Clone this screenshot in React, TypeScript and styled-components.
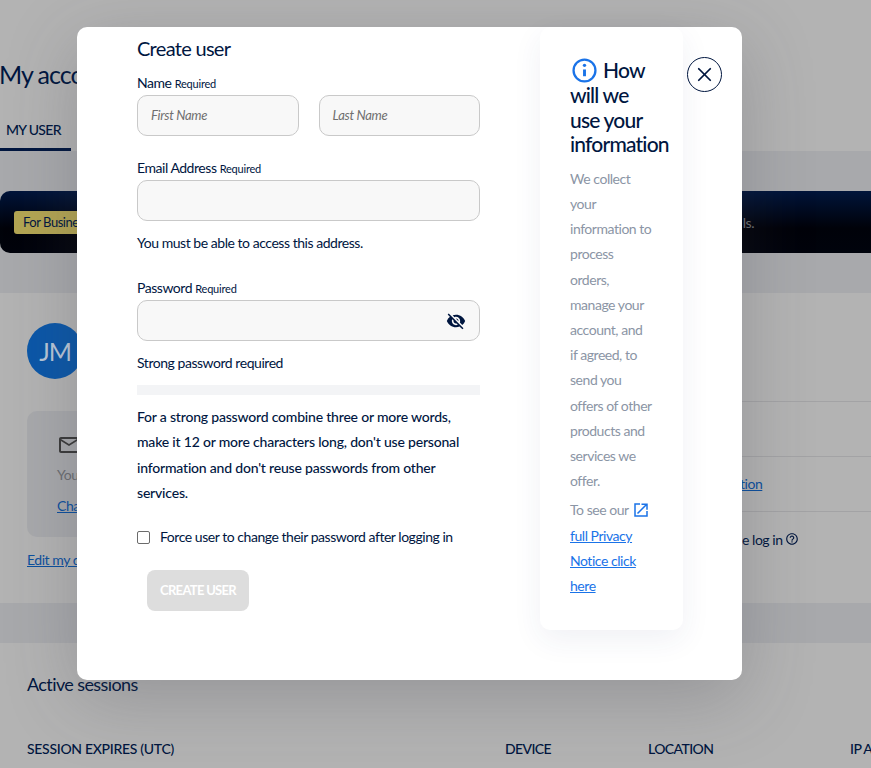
import React from 'react';
import styled, {createGlobalStyle} from 'styled-components';
import {MdVisibilityOff, MdOutlineEmail, MdOutlineHelpOutline} from 'react-icons/md';
import {X} from 'lucide-react';

const navy = '#00163f';
const panel = '#b3b3b3';
const strip = '#a8a9ac';

const GlobalStyle = createGlobalStyle`
  html, body {
    margin: 0;
    padding: 0;
    height: 100%;
    overflow: hidden;
  }
  body {
    font-family: 'Lato', 'Liberation Sans', sans-serif;
    color: ${navy};
    letter-spacing: -0.46px;
  }
  * {
    box-sizing: border-box;
  }
`;

const Page = styled.div`
  position: relative;
  width: 871px;
  height: 768px;
  overflow: hidden;
  background: ${strip};
`;

const TopPanel = styled.section`
  height: 151px;
  background: ${panel};
  padding-top: 59px;
`;

const PageTitle = styled.h1`
  margin: 0 0 0 -1px;
  font-size: 25px;
  line-height: 30px;
  font-weight: 400;
  letter-spacing: -1px;
  white-space: nowrap;
`;

const Tab = styled.div`
  width: 71px;
  height: 45px;
  margin-top: 17px;
  padding: 15px 0 0 6px;
  border-bottom: 3px solid ${navy};
  font-size: 14px;
  line-height: 18px;
  font-weight: 500;
  letter-spacing: -0.7px;
`;

const BannerStrip = styled.section`
  height: 142px;
  padding-top: 40px;
`;

const Banner = styled.div`
  display: flex;
  align-items: center;
  justify-content: space-between;
  height: 62px;
  padding: 0 117px 0 14px;
  border-radius: 10px 0 0 10px;
  background: linear-gradient(180deg, #00143a 0%, #000209 60%, #00030c 100%);
  color: #6f7073;
  font-size: 14px;
  white-space: nowrap;
`;

const Badge = styled.span`
  padding: 3px 9px;
  border-radius: 3px;
  background: #b3a553;
  color: ${navy};
  font-size: 13px;
  line-height: 17px;
`;

const ProfilePanel = styled.section`
  display: grid;
  grid-template-columns: 1fr 129px;
  height: 310px;
  background: ${panel};
`;

const ProfileLeft = styled.div`
  padding: 30px 0 0 27px;
`;

const Avatar = styled.div`
  display: flex;
  align-items: center;
  justify-content: center;
  width: 56px;
  height: 56px;
  border-radius: 50%;
  background: #0b57a8;
  color: #b8c6d8;
  font-size: 25px;
  letter-spacing: -1.2px;
`;

const EmailCard = styled.div`
  height: 126px;
  margin-top: 32px;
  padding: 22px 0 0 30px;
  border-radius: 10px 0 0 10px;
  background: #a8a9ac;
  font-size: 14px;
`;

const CardText = styled.div`
  margin-top: 5px;
  color: #6c6e72;
  line-height: 20px;
`;

const DarkLink = styled.a`
  color: #0b4f9e;
  font-size: 14px;
  line-height: 20px;
  text-decoration: underline;
`;

const CardLink = styled(DarkLink)`
  display: block;
  margin-top: 11px;
`;

const EditLink = styled(DarkLink)`
  display: block;
  margin-top: 13px;
`;

const ProfileRight = styled.div`
  padding-top: 108px;
`;

const DetailRow = styled.div`
  display: flex;
  align-items: center;
  gap: 2px;
  height: 55px;
  border-top: 1px solid #a3a3a5;
  font-size: 14px;
  white-space: nowrap;
`;

const RowLink = styled(DarkLink)`
  margin-left: -2px;
`;

const SessionsStrip = styled.section`
  height: 40px;
`;

const SessionsPanel = styled.section`
  height: 125px;
  padding: 30px 0 0 27px;
  background: ${panel};
`;

const SessionsTitle = styled.h2`
  margin: 0;
  font-size: 18px;
  line-height: 22px;
  font-weight: 400;
  letter-spacing: -0.6px;
`;

const SessionsHead = styled.div`
  display: grid;
  grid-template-columns: 478px 143px 202px 100px;
  margin-top: 45px;
  font-size: 14px;
  line-height: 18px;
  font-weight: 500;
  letter-spacing: -0.6px;
  white-space: nowrap;
`;

const SessionExpires = styled.span`
  letter-spacing: -0.3px;
`;

const Overlay = styled.div`
  position: absolute;
  top: 27px;
  left: 77px;
  display: flex;
  width: 665px;
  height: 653px;
  padding-left: 60px;
  border-radius: 10px;
  background: #fff;
  box-shadow: 0 18px 70px rgba(60, 62, 75, 0.26);
`;

const Form = styled.form`
  width: 343px;
`;

const ModalTitle = styled.h2`
  margin: 9px 0 0;
  font-size: 20px;
  line-height: 24px;
  font-weight: 400;
  letter-spacing: -0.7px;
`;

const Label = styled.label<{$top: number}>`
  display: block;
  margin-top: ${props => props.$top}px;
  font-size: 14px;
  line-height: 18px;
`;

const Required = styled.span`
  font-size: 11px;
  letter-spacing: -0.2px;
`;

const NameRow = styled.div`
  display: flex;
  gap: 20px;
  margin-top: 2px;
`;

const InputBox = styled.div`
  position: relative;
  flex: 1;
  height: 41px;
  margin-top: 2px;
  border: 1px solid #c9c9c9;
  border-radius: 10px;
  background: #f8f8f8;
`;

const NameBox = styled(InputBox)`
  margin-top: 0;
  padding: 0 13px;
  color: #6f6f6f;
  font-size: 13px;
  font-style: italic;
  line-height: 39px;
  letter-spacing: -0.3px;
`;

const EyeIcon = styled.span`
  position: absolute;
  top: 10px;
  right: 13px;
  display: flex;
  color: ${navy};
`;

const Hint = styled.p`
  margin: 13px 0 0;
  font-size: 14px;
  line-height: 18px;
`;

const StrengthBar = styled.div`
  height: 10px;
  margin-top: 13px;
  background: #f3f4f6;
`;

const Advice = styled.p`
  margin: 9px 0 0;
  font-size: 14px;
  line-height: 25.3px;
  font-weight: 500;
  letter-spacing: -0.2px;
`;

const CheckRow = styled.label`
  display: flex;
  align-items: center;
  gap: 10px;
  margin-top: 23px;
  font-size: 14px;
  line-height: 18px;
  white-space: nowrap;
`;

const CheckBox = styled.span`
  width: 13px;
  height: 13px;
  border: 1px solid #6b6b6b;
  border-radius: 2px;
  background: #fff;
`;

const SubmitButton = styled.button`
  display: block;
  width: 102px;
  height: 41px;
  margin: 24px 0 0 10px;
  padding: 0 0 2px;
  border: 0;
  border-radius: 8px;
  background: #dddddd;
  color: #fff;
  font-family: inherit;
  font-size: 13px;
  font-weight: 700;
  letter-spacing: -0.7px;
`;

const InfoCard = styled.aside`
  width: 143px;
  height: 603px;
  margin-left: 60px;
  padding: 31px 14px 0 30px;
  border-radius: 10px;
  background: #fff;
  box-shadow: 0 10px 30px rgba(40, 60, 110, 0.07);
`;

const InfoTitle = styled.h3`
  margin: 0;
  font-size: 21px;
  line-height: 24.6px;
  font-weight: 500;
  letter-spacing: -0.8px;
`;

const InfoIcon = styled.svg`
  width: 25px;
  height: 25px;
  margin: 0 6px 0 2px;
  vertical-align: -5px;
`;

const InfoText = styled.p`
  max-width: 82px;
  margin: 9px 0 0;
  color: #8b95a5;
  font-size: 14px;
  line-height: 25.2px;
`;

const PrivacyText = styled(InfoText)`
  margin-top: 4px;
`;

const ExternalIcon = styled.svg`
  width: 14px;
  height: 14px;
  margin-left: 5px;
  vertical-align: -2px;
`;

const BlueLink = styled.a`
  color: #1a73e8;
  text-decoration: underline;
`;

const CloseButton = styled.button`
  position: absolute;
  top: 30px;
  left: 610px;
  display: flex;
  align-items: center;
  justify-content: center;
  width: 35px;
  height: 35px;
  padding: 0;
  border: 1px solid ${navy};
  border-radius: 50%;
  background: #fff;
  color: ${navy};
`;

export default function App(): JSX.Element {
  return (
    <Page>
      <GlobalStyle />
      <TopPanel>
        <PageTitle>My account</PageTitle>
        <Tab>MY USER</Tab>
      </TopPanel>
      <BannerStrip>
        <Banner>
          <Badge>For Business</Badge>
          <span>ls.</span>
        </Banner>
      </BannerStrip>
      <ProfilePanel>
        <ProfileLeft>
          <Avatar>JM</Avatar>
          <EmailCard>
            <MdOutlineEmail size={24} color="#3a3a3a" />
            <CardText>You</CardText>
            <CardLink>Change</CardLink>
          </EmailCard>
          <EditLink>Edit my details</EditLink>
        </ProfileLeft>
        <ProfileRight>
          <DetailRow />
          <DetailRow>
            <RowLink>tion</RowLink>
          </DetailRow>
          <DetailRow>
            e log in <MdOutlineHelpOutline size={14} />
          </DetailRow>
        </ProfileRight>
      </ProfilePanel>
      <SessionsStrip />
      <SessionsPanel>
        <SessionsTitle>Active sessions</SessionsTitle>
        <SessionsHead>
          <SessionExpires>SESSION EXPIRES (UTC)</SessionExpires>
          <span>DEVICE</span>
          <span>LOCATION</span>
          <span>IP ADDRESS</span>
        </SessionsHead>
      </SessionsPanel>

      <Overlay>
        <Form>
          <ModalTitle>Create user</ModalTitle>
          <Label $top={14}>
            Name <Required>Required</Required>
          </Label>
          <NameRow>
            <NameBox>First Name</NameBox>
            <NameBox>Last Name</NameBox>
          </NameRow>
          <Label $top={23}>
            Email Address <Required>Required</Required>
          </Label>
          <InputBox />
          <Hint>You must be able to access this address.</Hint>
          <Label $top={27}>
            Password <Required>Required</Required>
          </Label>
          <InputBox>
            <EyeIcon>
              <MdVisibilityOff size={20} />
            </EyeIcon>
          </InputBox>
          <Hint>Strong password required</Hint>
          <StrengthBar />
          <Advice>
            For a strong password combine three or more words, make it 12 or more characters long,
            don't use personal information and don't reuse passwords from other services.
          </Advice>
          <CheckRow>
            <CheckBox />
            Force user to change their password after logging in
          </CheckRow>
          <SubmitButton type="button">CREATE USER</SubmitButton>
        </Form>
        <InfoCard>
          <InfoTitle>
            <InfoIcon viewBox="0 0 24 24" fill="none" stroke="#1a73e8" strokeWidth="2.2">
              <circle cx="12" cy="12" r="10.5" />
              <path d="M12 11v6.5" strokeWidth="2.8" />
              <circle cx="12" cy="7" r="1.6" fill="#1a73e8" stroke="none" />
            </InfoIcon>
            How
            <br />
            will we
            <br />
            use your
            <br />
            information
          </InfoTitle>
          <InfoText>
            We collect your information to process orders, manage your account, and if agreed, to
            send you offers of other products and services we offer.
          </InfoText>
          <PrivacyText>
            To see our
            <ExternalIcon viewBox="0 0 14 14" fill="none" stroke="#1a73e8" strokeWidth="1.5">
              <path d="M6 1H1v12h12V8" />
              <path d="M3.5 10.5 12 2M7.5 1.2H13v5.5" />
            </ExternalIcon>{' '}
            <BlueLink>full Privacy Notice click here</BlueLink>
          </PrivacyText>
        </InfoCard>
        <CloseButton type="button" aria-label="Close">
          <X size={23} strokeWidth={1.8} />
        </CloseButton>
      </Overlay>
    </Page>
  );
}
